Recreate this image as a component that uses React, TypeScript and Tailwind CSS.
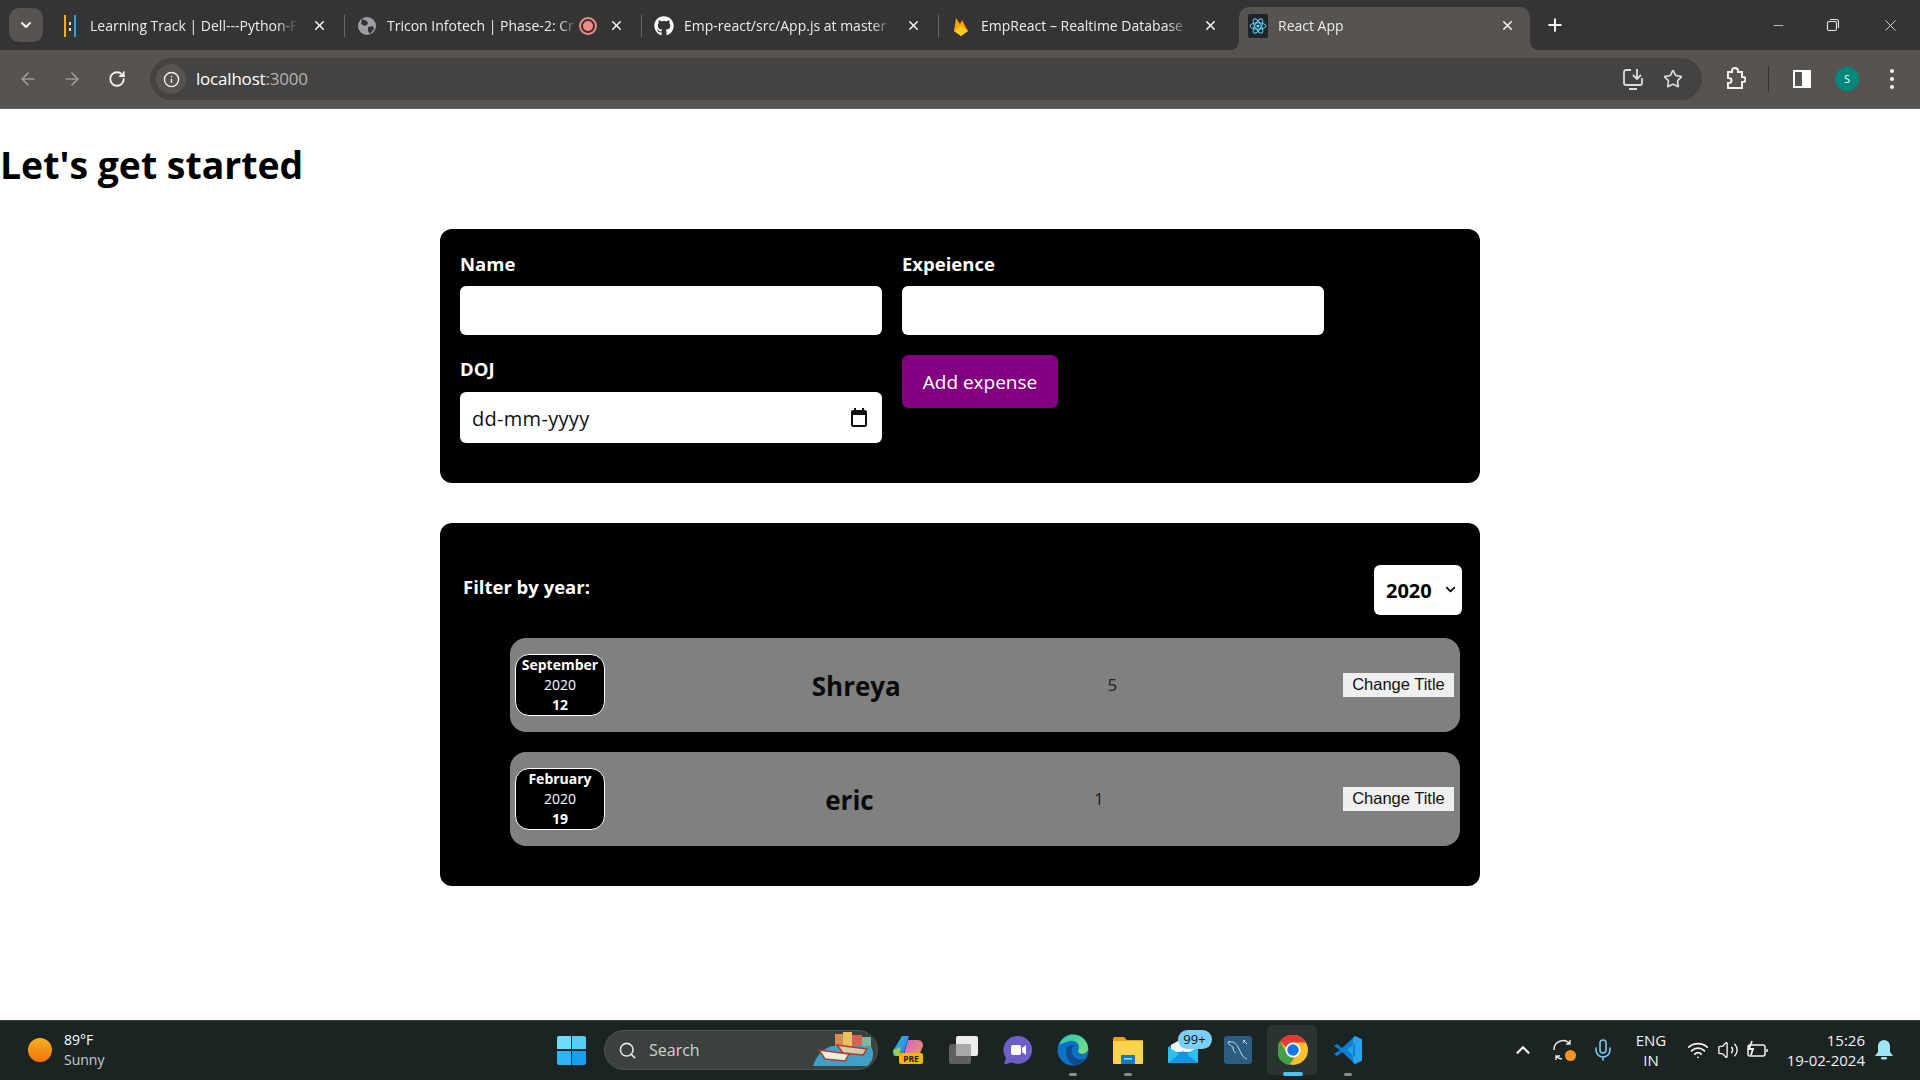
import React from "react";
import {
  ArrowLeft,
  ArrowRight,
  ChevronDown,
  ChevronUp,
  Info,
  Mic,
  Minus,
  Plus,
  RotateCw,
  Search,
  Star,
  Volume2,
  Wifi,
  X,
} from "lucide-react";
import { FaGithub } from "react-icons/fa";

const uiFont = "font-['Open_Sans','Noto_Sans',sans-serif]";

interface TabData {
  title: string;
  icon: React.ReactNode;
  recording?: boolean;
  active?: boolean;
}

const TrackIcon = () => (
  <svg width="20" height="24" viewBox="0 0 20 24">
    <rect x="4" y="1" width="2" height="22" fill="#f4b400" />
    <rect x="9" y="8" width="2" height="3" fill="#ddd" />
    <rect x="9" y="14" width="2" height="3" fill="#ddd" />
    <rect x="14" y="1" width="2" height="22" fill="#29a3e0" />
  </svg>
);

const GlobeIcon = () => (
  <svg width="20" height="20" viewBox="0 0 20 20">
    <circle cx="10" cy="10" r="9" fill="#9aa0a6" />
    <path d="M5 3l5 2 1 3-3 2-4-2zM11 11l5-1 1 3-4 5-2-3z" fill="#353333" />
  </svg>
);

const FlameIcon = () => (
  <svg width="20" height="22" viewBox="0 0 20 22">
    <path d="M3 16L5 3l4 6 2-4 6 11-7 5z" fill="#ffa000" />
    <path d="M3 16l7-5 7 5-7 5z" fill="#ffca28" />
  </svg>
);

const ReactFavicon = () => (
  <svg width="20" height="24" viewBox="0 0 20 24">
    <rect width="20" height="24" rx="2" fill="#20232a" />
    <g fill="none" stroke="#61dafb" strokeWidth="1">
      <ellipse cx="10" cy="12" rx="8" ry="3.2" />
      <ellipse cx="10" cy="12" rx="8" ry="3.2" transform="rotate(60 10 12)" />
      <ellipse cx="10" cy="12" rx="8" ry="3.2" transform="rotate(120 10 12)" />
    </g>
    <circle cx="10" cy="12" r="1.6" fill="#61dafb" />
  </svg>
);

const tabs: TabData[] = [
  { title: "Learning Track | Dell---Python-F", icon: <TrackIcon /> },
  { title: "Tricon Infotech | Phase-2: Cr", icon: <GlobeIcon />, recording: true },
  { title: "Emp-react/src/App.js at master", icon: <FaGithub size={20} color="#fff" /> },
  { title: "EmpReact – Realtime Database", icon: <FlameIcon /> },
  { title: "React App", icon: <ReactFavicon />, active: true },
];

const Tab = ({ tab, last }: { tab: TabData; last: boolean }) => (
  <div
    className={`relative flex shrink-0 items-center pl-[9px] ${
      tab.active
        ? "mr-[6px] mt-[7px] h-[43px] w-[291px] rounded-t-[10px] bg-[#565351] pb-[6px]"
        : "h-[50px] w-[297px] pt-[1px]"
    }`}
  >
    {tab.active && (
      <>
        <svg width="10" height="10" viewBox="0 0 10 10" className="absolute bottom-0 left-[-10px]">
          <path d="M0 10Q10 10 10 0V10Z" fill="#565351" />
        </svg>
        <svg width="10" height="10" viewBox="0 0 10 10" className="absolute bottom-0 right-[-10px]">
          <path d="M10 10Q0 10 0 0V10Z" fill="#565351" />
        </svg>
      </>
    )}
    <div className="flex h-[24px] w-[20px] shrink-0 items-center justify-center">{tab.icon}</div>
    <div
      className={`ml-[10px] overflow-hidden whitespace-nowrap text-[14px] text-[#ececec] [mask-image:linear-gradient(to_right,black_90%,transparent)] ${
        tab.recording ? "w-[191px]" : "mr-[14px] w-[208px]"
      }`}
    >
      {tab.title}
    </div>
    {tab.recording && (
      <div className="ml-[1px] flex h-[18px] w-[18px] shrink-0 items-center justify-center rounded-full border-2 border-[#f28b82]">
        <div className="h-[10px] w-[10px] rounded-full bg-[#f28b82]" />
      </div>
    )}
    {tab.recording && <div className="w-[12px] shrink-0" />}
    <X size={15} strokeWidth={2.5} color="#f1f1f1" className="shrink-0" />
    {!tab.active && !last && <div className="ml-[17px] h-[22px] w-px shrink-0 bg-[#6a6866]" />}
  </div>
);

const TabStrip = () => (
  <div className="flex h-[50px] items-start bg-[#353333] pl-[9px]">
    <div className="mr-[8px] mt-[8px] flex h-[34px] w-[34px] items-center justify-center rounded-[10px] bg-[#565351]">
      <ChevronDown size={16} strokeWidth={3} color="#fff" />
    </div>
    {tabs.map((tab, i) => (
      <Tab key={tab.title} tab={tab} last={i >= tabs.length - 2} />
    ))}
    <div className="ml-[9px] flex h-[50px] w-[20px] items-center justify-center">
      <Plus size={20} strokeWidth={2.5} color="#f1f1f1" />
    </div>
    <div className="ml-[203px] flex h-[50px] w-[20px] items-center justify-center">
      <Minus size={15} strokeWidth={1.2} color="#e8e8e8" />
    </div>
    <div className="ml-[35px] flex h-[50px] w-[20px] items-center justify-center">
      <svg width="14" height="14" viewBox="0 0 14 14" fill="none" stroke="#e8e8e8" strokeWidth="1.1">
        <rect x="1.5" y="3.5" width="9" height="9" rx="1.5" />
        <path d="M4 1.5h6.5a2 2 0 0 1 2 2V10" />
      </svg>
    </div>
    <div className="ml-[37px] flex h-[50px] w-[20px] items-center justify-center">
      <X size={19} strokeWidth={1.1} color="#e8e8e8" />
    </div>
  </div>
);

const Toolbar = () => (
  <div className="flex h-[59px] items-center border-b border-[#6a6866] bg-[#565351]">
    <div className="ml-[18px] w-[20px]">
      <ArrowLeft size={20} color="#9b9997" />
    </div>
    <div className="ml-[24px] w-[20px]">
      <ArrowRight size={20} color="#9b9997" />
    </div>
    <div className="ml-[26px] w-[20px]">
      <RotateCw size={18} strokeWidth={2.4} color="#f1f1f1" />
    </div>
    <div className="ml-[22px] flex h-[42px] w-[1552px] items-center rounded-full bg-[#454342] pl-[6px]">
      <div className="flex h-[30px] w-[30px] items-center justify-center rounded-full bg-[#565351]">
        <Info size={17} color="#f1f1f1" />
      </div>
      <div className="ml-[10px] text-[17px] tracking-[-0.2px] text-white">
        localhost<span className="text-[#b5b3b1]">:3000</span>
      </div>
      <div className="ml-auto flex items-center pr-[19px]">
        <svg width="22" height="24" viewBox="0 0 22 24" fill="none" stroke="#dcdcdc" strokeWidth="1.8">
          <path d="M9 3H4a2 2 0 0 0-2 2v11a2 2 0 0 0 2 2h14a2 2 0 0 0 2-2v-5" />
          <path d="M7 22h8M15 2v10M11 8l4 4 4-4" />
        </svg>
        <Star size={20} color="#dcdcdc" strokeWidth={2} className="ml-[19px]" />
      </div>
    </div>
    <div className="ml-[22px] w-[22px]">
      <svg width="22" height="24" viewBox="0 0 22 24" fill="none" stroke="#f1f1f1" strokeWidth="2">
        <path d="M4 5h4V4a3 3 0 0 1 6 0v1h4v5h1a2 2 0 0 1 0 5h-1v6H4v-5h1a2.5 2.5 0 0 0 0-5H4z" />
      </svg>
    </div>
    <div className="ml-[22px] h-[26px] w-px bg-[#353333]" />
    <div className="ml-[24px] flex h-[18px] w-[18px] justify-end border-2 border-white">
      <div className="h-full w-[7px] bg-white" />
    </div>
    <div className="ml-[24px] flex h-[24px] w-[24px] items-center justify-center rounded-full bg-[#00897b] text-[11px] text-white">
      S
    </div>
    <div className="ml-[31px] flex flex-col gap-[4px]">
      <div className="h-[4px] w-[4px] rounded-full bg-[#f1f1f1]" />
      <div className="h-[4px] w-[4px] rounded-full bg-[#f1f1f1]" />
      <div className="h-[4px] w-[4px] rounded-full bg-[#f1f1f1]" />
    </div>
  </div>
);

const Field = ({ label, children }: { label: string; children: React.ReactNode }) => (
  <div className="w-[422px]">
    <label className="block h-[28px] text-[18.5px] font-bold leading-[28px] text-white">{label}</label>
    {children}
  </div>
);

const ExpenseForm = () => (
  <div className="w-[1040px] rounded-xl bg-black pb-[40px] pl-[20px] pr-[20px] pt-[21px]">
    <div className="flex flex-wrap items-start gap-x-[20px] gap-y-[20px]">
      <Field label="Name">
        <input className="mt-[8px] block h-[49px] w-full rounded-md bg-white" />
      </Field>
      <Field label="Expeience">
        <input className="mt-[8px] block h-[49px] w-full rounded-md bg-white" />
      </Field>
      <Field label="DOJ">
        <div className="mt-[9px] flex h-[51px] w-full items-center justify-between rounded-md bg-white pl-[12px] pr-[14px] text-[20px] tracking-[0.3px] text-[#111]">
          <span className="pt-[2px]">dd-mm-yyyy</span>
          <svg width="18" height="20" viewBox="0 0 18 20">
            <path
              d="M4 0v2H3a2 2 0 0 0-2 2v13a2 2 0 0 0 2 2h12a2 2 0 0 0 2-2V4a2 2 0 0 0-2-2h-1V0h-2v2H6V0zM3 7h12v10H3z"
              fill="#111"
            />
          </svg>
        </div>
      </Field>
      <button className="h-[53px] w-[156px] rounded-md bg-[#800080] pt-[1px] text-[19px] text-white">Add expense</button>
    </div>
  </div>
);

const DateBadge = ({ month, day }: { month: string; day: number }) => (
  <div className="flex h-[62px] w-[90px] shrink-0 flex-col items-center justify-center rounded-[14px] border border-white bg-black text-[14px] leading-[20px] text-white">
    <div className="font-bold">{month}</div>
    <div>2020</div>
    <div className="font-bold">{day}</div>
  </div>
);

const EmployeeRow = ({
  month,
  day,
  name,
  experience,
}: {
  month: string;
  day: number;
  name: string;
  experience: number;
}) => (
  <div className="flex h-[94px] items-center justify-between rounded-2xl bg-[#808080] pl-[5px] pr-[6px]">
    <DateBadge month={month} day={day} />
    <h2 className="pt-[3px] text-[26px] font-bold text-[#0b0b0b]">{name}</h2>
    <div className="mr-[19px] text-[17px] text-[#222]">{experience}</div>
    <button className="h-[24px] w-[111px] bg-[#efefef] pb-[2px] font-['Liberation_Sans',sans-serif] text-[16.5px] leading-[22px] text-[#111]">
      Change Title
    </button>
  </div>
);

const EmployeeList = () => (
  <div className="mt-[40px] w-[1040px] rounded-xl bg-black pb-[40px] pl-[20px] pr-[18px] pt-[42px]">
    <div className="flex items-center justify-between">
      <label className="mb-[6px] ml-[3px] text-[18.5px] font-bold text-white">Filter by year:</label>
      <div className="relative">
        <select
          defaultValue="2020"
          className="block h-[50px] w-[88px] appearance-none rounded-md bg-white pl-[12px] pt-[1px] text-[20px] font-bold text-black"
        >
          <option value="2020">2020</option>
        </select>
        <ChevronDown size={15} strokeWidth={3} color="#111" className="absolute right-[4px] top-[17px]" />
      </div>
    </div>
    <div className="ml-[50px] mr-[2px] mt-[23px] flex flex-col gap-[20px]">
      <EmployeeRow month="September" day={12} name="Shreya" experience={5} />
      <EmployeeRow month="February" day={19} name="eric" experience={1} />
    </div>
  </div>
);

const WindowsLogo = () => (
  <div className="grid h-[29px] w-[29px] grid-cols-2 gap-[1.5px]">
    <div className="rounded-tl-[2px] bg-[#6fdcff]" />
    <div className="rounded-tr-[2px] bg-[#56cdfb]" />
    <div className="rounded-bl-[2px] bg-[#2fb4f7]" />
    <div className="rounded-br-[2px] bg-[#1a9df0]" />
  </div>
);

const SearchArt = () => (
  <svg width="64" height="36" viewBox="0 0 64 36">
    <rect x="24" y="2" width="8" height="16" fill="#d88a55" />
    <rect x="32" y="0" width="9" height="18" fill="#e8c35c" />
    <rect x="41" y="3" width="10" height="15" fill="#d9605a" />
    <rect x="51" y="5" width="9" height="13" fill="#7fb6a0" />
    <path d="M2 34C6 22 14 14 24 14h36c4 8 2 16-4 20z" fill="#3fa0c8" />
    <path d="M8 18l30 4-4 7-20-2z" fill="#f0ece0" stroke="#a83f2e" strokeWidth="1.5" />
    <path d="M26 13l30 4-4 6-20-2z" fill="#d9c8a8" stroke="#a83f2e" strokeWidth="1.5" />
  </svg>
);

const Copilot = () => (
  <svg width="32" height="30" viewBox="0 0 32 30">
    <defs>
      <linearGradient id="cpa" x1="0" y1="0" x2="1" y2="1">
        <stop offset="0" stopColor="#2fc4e8" />
        <stop offset="1" stopColor="#2a6fdb" />
      </linearGradient>
      <linearGradient id="cpb" x1="0" y1="0" x2="1" y2="1">
        <stop offset="0" stopColor="#d35bd8" />
        <stop offset="1" stopColor="#f0a04b" />
      </linearGradient>
    </defs>
    <path d="M10 1h7l-6 20H3Q0 20 1 16z" fill="url(#cpa)" />
    <path d="M16 5h10q5 0 5 6l-5 12H11z" fill="url(#cpb)" />
    <path d="M1 15l8-3-2 9H3z" fill="#9ccc45" />
    <rect x="7" y="18" width="24" height="11" rx="2" fill="#f7b500" />
    <text x="19" y="27" textAnchor="middle" fontSize="8.5" fontWeight="700" fill="#222" fontFamily="Open Sans, sans-serif">
      PRE
    </text>
  </svg>
);

const TaskView = () => (
  <svg width="30" height="30" viewBox="0 0 30 30">
    <rect x="1" y="9" width="22" height="20" rx="2" fill="#5f5f5f" />
    <rect x="8" y="1" width="22" height="20" rx="2" fill="#ececec" />
    <rect x="8" y="9" width="15" height="12" fill="#a9a9a9" />
  </svg>
);

const Meet = () => (
  <svg width="30" height="30" viewBox="0 0 30 30">
    <path d="M15 1a14 14 0 1 1-6 26.6L1 29.500l2-6.500A14 14 0 0 1 15 1z" fill="#6b60c9" />
    <rect x="8" y="10" width="10" height="10" rx="2" fill="#fff" />
    <path d="M19 13l4-3v10l-4-3z" fill="#fff" />
  </svg>
);

const Edge = () => (
  <svg width="32" height="32" viewBox="0 0 32 32">
    <defs>
      <linearGradient id="edg" x1="0" y1="0" x2="1" y2="1">
        <stop offset="0" stopColor="#2bc5b4" />
        <stop offset="1" stopColor="#7fe07a" />
      </linearGradient>
    </defs>
    <circle cx="16" cy="16" r="15.500" fill="#0c72c4" />
    <path d="M2 11C5 3 11 .5 16 .5c8 0 15 6 15 14 0 4-4 6-8 5-3-1-1-4-1-6C22 9 18 6 13 7 8 8 4 10 2 11z" fill="url(#edg)" />
    <path d="M9 17c0-5 6-7 10-5-4 0-5 3-4 7 1 5 7 8 13 6-3 4-7 6-11 6-5-2-8-8-8-14z" fill="#0e4c8f" />
  </svg>
);

const Folder = () => (
  <svg width="30" height="28" viewBox="0 0 30 28">
    <path d="M0 3a2 2 0 0 1 2-2h9l3 3h16v6H0z" fill="#e6a217" />
    <rect y="5" width="30" height="23" rx="1" fill="#fcd34d" />
    <rect x="8" y="19" width="14" height="9" rx="1" fill="#0f7bc4" />
    <rect x="11" y="22" width="8" height="1.500" fill="#9ad7f5" />
  </svg>
);

const Mail = () => (
  <svg width="30" height="26" viewBox="0 0 30 26">
    <path d="M0 10l15-9 15 9v16H0z" fill="#0f86d6" />
    <path d="M3 8l12-7 12 7v7H3z" fill="#f3f3f3" />
    <path d="M0 26V10l15 9 15-9v16z" fill="#2cc0f2" />
    <path d="M0 26l15-12 15 12z" fill="#1396e3" />
  </svg>
);

const MySql = () => (
  <svg width="28" height="28" viewBox="0 0 28 28">
    <rect width="28" height="28" rx="3" fill="#2b5c82" />
    <path
      d="M4 6c5-1 8 1 10 5 1 3 3 5 4 8 1 2 3 3 5 4M4 6c1 3 3 4 5 5 0 3 1 5 3 6M19 4l4 4M21 4l-2 3"
      fill="none"
      stroke="#c9dbe6"
      strokeWidth="1"
    />
  </svg>
);

const ChromeLogo = () => (
  <svg width="30" height="30" viewBox="0 0 30 30">
    <circle cx="15" cy="15" r="15" fill="#fbc02d" />
    <path d="M15 0a15 15 0 0 1 13 7.500H15a7.500 7.500 0 0 0-7 5L2 6A15 15 0 0 1 15 0z" fill="#e53935" />
    <path d="M2 6l6.500 11.500a7.500 7.500 0 0 0 8.500 5L11 30A15 15 0 0 1 2 6z" fill="#43a047" />
    <circle cx="15" cy="15" r="7.500" fill="#fff" />
    <circle cx="15" cy="15" r="5.800" fill="#1a73e8" />
  </svg>
);

const VsCode = () => (
  <svg width="30" height="30" viewBox="0 0 30 30">
    <path d="M22 1l7 3.500v21L22 29 9 17l-5 4-3-2 6-4-6-4 3-2 5 4z" fill="#0e7fd0" />
    <path d="M22 1l7 3.500v21L22 29l-2-2V3zM22 8l-8 7 8 7z" fill="#28a2e8" fillRule="evenodd" />
  </svg>
);

const AppCell = ({
  children,
  dot,
  active,
}: {
  children: React.ReactNode;
  dot?: boolean;
  active?: boolean;
}) => (
  <div className="relative flex h-[50px] w-[55px] shrink-0 items-center justify-center">
    {active && <div className="absolute inset-y-0 left-[2px] right-[3px] rounded-[5px] bg-[#2b3330]" />}
    <div className="relative">{children}</div>
    {dot && <div className="absolute bottom-[-1px] h-[3px] w-[8px] rounded-full bg-[#8a8f8e]" />}
    {active && <div className="absolute bottom-[-1px] h-[4px] w-[20px] rounded-full bg-[#4fc3f7]" />}
  </div>
);

const Taskbar = () => (
  <div className="flex h-[60px] shrink-0 items-center border-t border-[#39403e] bg-[#1c2423] pb-[1px]">
    <div className="ml-[28px] h-[24px] w-[24px] rounded-full bg-gradient-to-b from-[#f2b01e] to-[#f2720c]" />
    <div className="ml-[12px] w-[60px] text-[14px] leading-[20px]">
      <div className="text-white">89°F</div>
      <div className="text-[#c9cccb]">Sunny</div>
    </div>
    <div className="ml-[433px]">
      <WindowsLogo />
    </div>
    <div className="ml-[18px] flex h-[40px] w-[274px] items-center rounded-full border border-[#4d5450] bg-[#3b423d] pl-[13px] pr-[2px]">
      <Search size={19} color="#e8e8e8" strokeWidth={2} />
      <span className="ml-[12px] text-[16px] text-[#d0d2d1]">Search</span>
      <div className="ml-auto">
        <SearchArt />
      </div>
    </div>
    <div className="ml-[2px] flex">
      <AppCell><Copilot /></AppCell>
      <AppCell><TaskView /></AppCell>
      <AppCell><Meet /></AppCell>
      <AppCell dot><Edge /></AppCell>
      <AppCell dot><Folder /></AppCell>
      <AppCell>
        <Mail />
        <div className="absolute left-[10px] top-[-7px] h-[19px] w-[34px] rounded-full bg-[#7cd0f5] text-center text-[13px] leading-[19px] text-[#111]">
          99+
        </div>
      </AppCell>
      <AppCell><MySql /></AppCell>
      <AppCell active><ChromeLogo /></AppCell>
      <AppCell dot><VsCode /></AppCell>
    </div>
    <ChevronUp size={22} color="#f1f1f1" strokeWidth={2.5} className="ml-[137px]" />
    <div className="relative ml-[18px] h-[24px] w-[24px]">
      <svg width="24" height="24" viewBox="0 0 24 24" fill="none" stroke="#e8e8e8" strokeWidth="1.4">
        <path d="M2 12A9 9 0 0 1 18 6M18 2v4h-4M4 22v-4h4M4 18a9 9 0 0 0 6 3" />
      </svg>
      <div className="absolute bottom-[1px] right-0 h-[11px] w-[11px] rounded-full bg-[#f7941d]" />
    </div>
    <Mic size={24} color="#7cc7e8" strokeWidth={1.6} className="ml-[15px]" />
    <div className="ml-[15px] w-[42px] text-center text-[15px] leading-[20px] text-[#f1f1f1]">
      <div>ENG</div>
      <div>IN</div>
    </div>
    <Wifi size={22} color="#f1f1f1" strokeWidth={2} className="ml-[15px]" />
    <Volume2 size={22} color="#f1f1f1" strokeWidth={1.5} className="ml-[8px]" />
    <svg width="24" height="24" viewBox="0 0 24 24" fill="none" stroke="#f1f1f1" strokeWidth="1.5" className="ml-[6px]">
      <rect x="3" y="7" width="17" height="11" rx="2" />
      <path d="M22 11v3" />
      <path d="M7 3L4 11h4l-2 6" strokeWidth="1.800" />
    </svg>
    <div className="ml-[6px] w-[90px] whitespace-nowrap text-right text-[15px] leading-[20px] text-[#f1f1f1]">
      <div>15:26</div>
      <div>19-02-2024</div>
    </div>
    <svg width="20" height="22" viewBox="0 0 20 22" className="ml-[9px]">
      <path d="M10 1a6 6 0 0 1 6 6v6l3 4H1l3-4V7a6 6 0 0 1 6-6z" fill="#9fe3f5" />
      <rect x="7" y="18" width="6" height="2.500" rx="1.200" fill="#9fe3f5" />
    </svg>
  </div>
);

const App: React.FC = () => {
  return (
    <div className={`flex h-screen w-full flex-col overflow-hidden bg-white ${uiFont}`}>
      <TabStrip />
      <Toolbar />
      <main className="flex-1">
        <h1 className="mt-[29px] h-[54px] text-[37.4px] font-bold leading-[54px] text-black">Let's get started</h1>
        <div className="ml-[440px] mt-[37px]">
          <ExpenseForm />
          <EmployeeList />
        </div>
      </main>
      <Taskbar />
    </div>
  );
};

export default App;
